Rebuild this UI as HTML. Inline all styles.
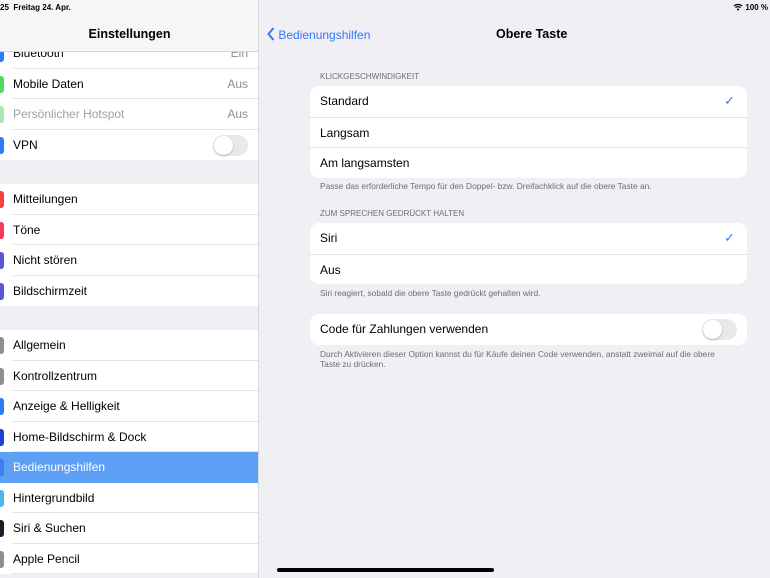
<!DOCTYPE html>
<html><head><meta charset="utf-8"><style>
*{margin:0;padding:0;box-sizing:border-box}
body{width:770px;height:578px;overflow:hidden;background:#efeff4;font-family:"Liberation Sans",sans-serif;position:relative;color:#000}
.side{position:absolute;left:0;top:0;width:259px;height:578px;background:#efeff4;border-right:1px solid #d8d8dc;overflow:hidden}
.hdr{position:absolute;left:0;top:0;width:259px;height:52px;background:#f6f6f7;border-bottom:1px solid #d6d6da;z-index:2}
.row{position:absolute;left:0;width:259px;height:30.5px;background:#fff;font-size:12px;line-height:31.5px;padding-left:13px}
.row:after{content:"";position:absolute;left:13px;right:0;bottom:0;height:1px;background:#e3e3e6}
.row.last:after{display:none}
.ic{position:absolute;left:-4px;top:7px;width:8px;height:17px;border-radius:3px}
.val{position:absolute;right:11px;top:0;color:#8e8e93}
.tog{position:absolute;width:35px;height:21px;border-radius:11px;background:#e9e9eb}
.tog:after{content:"";position:absolute;left:1px;top:1px;width:19px;height:19px;border-radius:50%;background:#fff;box-shadow:0 1px 2px rgba(0,0,0,.25)}
.grp{position:absolute;left:310px;width:437px;background:#fff;border-radius:9px;overflow:hidden}
.gr{position:relative;height:30.5px;line-height:30.5px;font-size:12px;padding-left:10px}
.gr+.gr{border-top:1px solid #e3e3e6}
.ck{position:absolute;right:12px;top:0;color:#3478f6;font-size:13px}
.cap{position:absolute;left:320px;font-size:8px;color:#6d6d72}
.ft{position:absolute;left:320px;font-size:8.4px;color:#6d6d72;line-height:10px;width:405px}
</style></head><body>
<div class="side">
<div class="hdr">
<div style="position:absolute;left:0;top:3px;font-size:8px;font-weight:bold">25&nbsp; Freitag 24. Apr.</div>
<div style="position:absolute;left:0;width:259px;top:27px;text-align:center;font-size:12.5px;font-weight:bold">Einstellungen</div>
</div>
<div class="row" style="top:38px"><span class="ic" style="background:#2f7cf6"></span>Bluetooth<span class="val">Ein</span></div>
<div class="row" style="top:68.5px"><span class="ic" style="background:#4cd964"></span>Mobile Daten<span class="val">Aus</span></div>
<div class="row" style="top:99px;color:#a0a0a5"><span class="ic" style="background:#a8e8b2"></span>Persönlicher Hotspot<span class="val">Aus</span></div>
<div class="row last" style="top:129.5px"><span class="ic" style="background:#2f7cf6"></span>VPN<span class="tog" style="right:11px;top:5px"></span></div>
<div class="row" style="top:184px"><span class="ic" style="background:#f0443a"></span>Mitteilungen</div>
<div class="row" style="top:214.5px"><span class="ic" style="background:#f23a5a"></span>Töne</div>
<div class="row" style="top:245px"><span class="ic" style="background:#5a56d6"></span>Nicht stören</div>
<div class="row last" style="top:275.5px"><span class="ic" style="background:#5a56d6"></span>Bildschirmzeit</div>
<div class="row" style="top:330px"><span class="ic" style="background:#8e8e93"></span>Allgemein</div>
<div class="row" style="top:360.5px"><span class="ic" style="background:#8e8e93"></span>Kontrollzentrum</div>
<div class="row" style="top:391px"><span class="ic" style="background:#2f7cf6"></span>Anzeige &amp; Helligkeit</div>
<div class="row" style="top:421.5px"><span class="ic" style="background:#1e3fd8"></span>Home-Bildschirm &amp; Dock</div>
<div class="row last" style="top:452px;background:#5e9ff6;color:#fff"><span class="ic" style="background:#3a7ef2"></span>Bedienungshilfen</div>
<div class="row" style="top:482.5px"><span class="ic" style="background:#4ab8e8"></span>Hintergrundbild</div>
<div class="row" style="top:513px"><span class="ic" style="background:#1c1c2a"></span>Siri &amp; Suchen</div>
<div class="row" style="top:543.5px"><span class="ic" style="background:#8e8e93"></span>Apple Pencil</div>
</div>
<div style="position:absolute;right:2px;top:3px;font-size:8px;font-weight:bold">
<svg width="10" height="8" viewBox="0 0 10 8" style="vertical-align:-1px"><path d="M1 3a6 6 0 0 1 8 0M2.5 4.6a4 4 0 0 1 5 0" stroke="#000" stroke-width="1.2" fill="none"/><circle cx="5" cy="6.5" r="1" fill="#000"/></svg> 100 %</div>
<div style="position:absolute;left:267px;top:27px;font-size:12px;color:#3478f6">
<svg width="8" height="14" viewBox="0 0 8 14" style="vertical-align:-2px"><path d="M6.5 1L1.5 7l5 6" stroke="#3478f6" stroke-width="2" fill="none"/></svg> Bedienungshilfen</div>
<div style="position:absolute;left:496px;top:27px;font-size:12.5px;font-weight:bold">Obere Taste</div>
<div class="cap" style="top:72px">KLICKGESCHWINDIGKEIT</div>
<div class="grp" style="top:86px">
<div class="gr">Standard<span class="ck">✓</span></div>
<div class="gr">Langsam</div>
<div class="gr">Am langsamsten</div>
</div>
<div class="ft" style="top:181px">Passe das erforderliche Tempo für den Doppel- bzw. Dreifachklick auf die obere Taste an.</div>
<div class="cap" style="top:209px">ZUM SPRECHEN GEDRÜCKT HALTEN</div>
<div class="grp" style="top:223px">
<div class="gr">Siri<span class="ck">✓</span></div>
<div class="gr">Aus</div>
</div>
<div class="ft" style="top:288px">Siri reagiert, sobald die obere Taste gedrückt gehalten wird.</div>
<div class="grp" style="top:314px;height:31px">
<div class="gr">Code für Zahlungen verwenden<span class="tog" style="right:10px;top:5px"></span></div>
</div>
<div class="ft" style="top:349px">Durch Aktivieren dieser Option kannst du für Käufe deinen Code verwenden, anstatt zweimal auf die obere<br>Taste zu drücken.</div>
<div style="position:absolute;left:277px;top:568px;width:217px;height:4px;border-radius:2px;background:#000"></div>
</body></html>
